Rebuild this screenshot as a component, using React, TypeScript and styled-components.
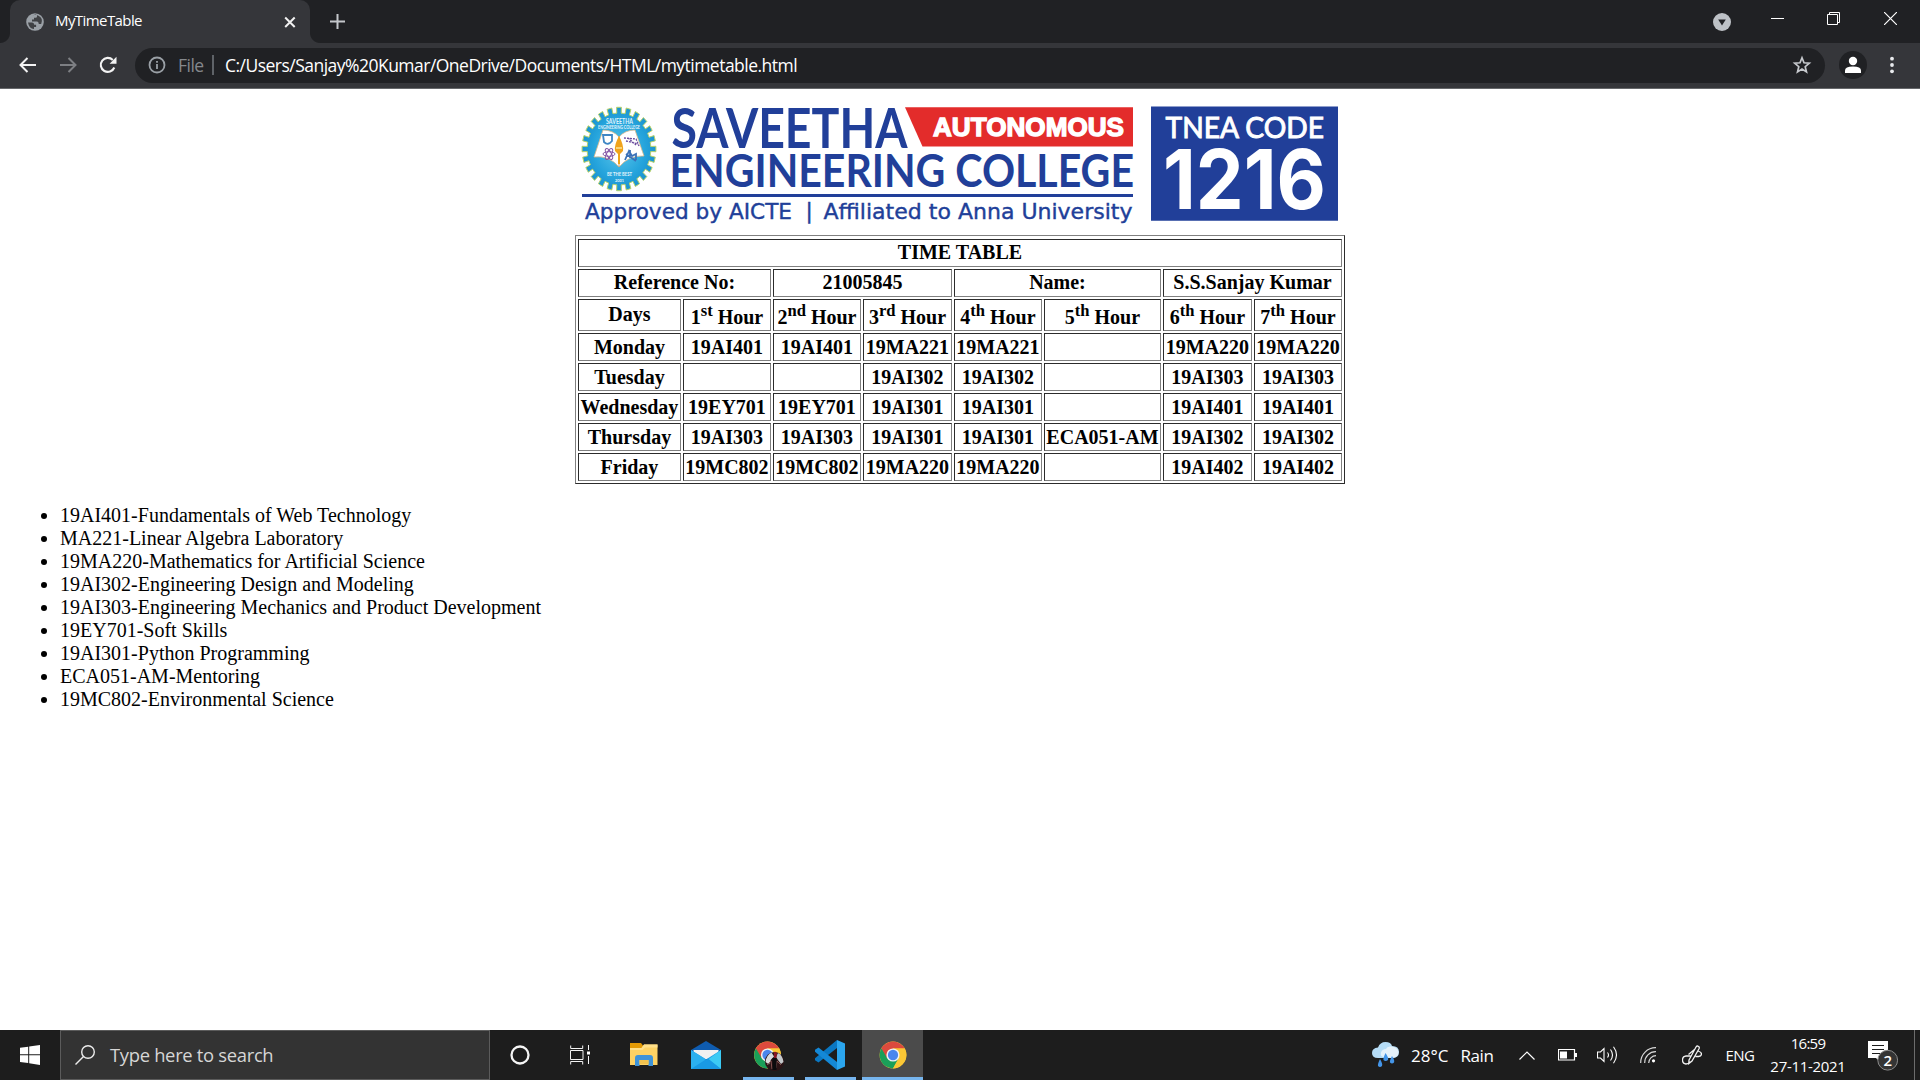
import React from 'react';
import styled, { createGlobalStyle } from 'styled-components';

const UI_FONT = '"Open Sans", "Noto Sans", sans-serif';
const PAGE_FONT = '"Liberation Serif", "Times New Roman", serif';
const BLUE = '#213f99';

const GlobalStyle = createGlobalStyle`
  html, body { margin: 0; padding: 0; background: #fff; overflow: hidden; }
  svg { display: block; flex: none; }
`;

const Screen = styled.div`
  width: 1920px;
  height: 1080px;
  display: flex;
  flex-direction: column;
  overflow: hidden;
`;

const Label = styled.span<{ $size: number; $color?: string; $track?: number; $drop?: number; $lift?: number }>`
  font-family: ${UI_FONT};
  font-size: ${(p) => p.$size}px;
  line-height: 1.2;
  color: ${(p) => p.$color ?? '#fff'};
  letter-spacing: ${(p) => p.$track ?? 0}px;
  padding-top: ${(p) => p.$drop ?? 0}px;
  padding-bottom: ${(p) => p.$lift ?? 0}px;
  white-space: pre;
`;

const TabStrip = styled.header`
  height: 43px;
  flex: none;
  display: flex;
  background: #202124;
`;

const TabCorner = styled.div<{ $side: 'left' | 'right' }>`
  width: 10px;
  height: 43px;
  background: radial-gradient(circle at ${(p) => (p.$side === 'left' ? '0' : '10px')} 33px, #202124 9.5px, #35363a 10.5px)
    0 0 / 10px 43px no-repeat;
  clip-path: inset(33px 0 0 0);
`;

const Tab = styled.div`
  width: 300px;
  height: 43px;
  box-sizing: border-box;
  padding: 0 13px 0 16px;
  display: flex;
  align-items: center;
  background: #35363a;
  border-radius: 10px 10px 0 0;
`;

const TabTitle = styled.div`
  flex: 1;
  padding: 0 0 3px 11px;
  display: flex;
`;

const NewTab = styled.div`
  padding: 14px 0 0 10px;
  flex: 1;
`;

const WindowControls = styled.div`
  display: flex;
`;

const ControlSlot = styled.div<{ $w: number; $top?: number }>`
  width: ${(p) => p.$w}px;
  padding-top: ${(p) => p.$top ?? 0}px;
  display: flex;
  justify-content: center;
  align-items: flex-start;
`;

const Toolbar = styled.div`
  height: 46px;
  flex: none;
  box-sizing: border-box;
  display: flex;
  align-items: center;
  padding: 0 0 1px 8px;
  background: #35363a;
  border-bottom: 1px solid #66686b;
`;

const NavSlot = styled.div`
  width: 40px;
  display: flex;
  justify-content: center;
`;

const Omnibox = styled.div`
  margin-left: 7px;
  width: 1690px;
  height: 35px;
  box-sizing: border-box;
  padding: 0 13px 0 13px;
  display: flex;
  align-items: center;
  background: #202124;
  border-radius: 18px;
`;

const SchemeDivider = styled.div`
  width: 2px;
  height: 20px;
  margin: 0 11px 0 9px;
  background: #5f6368;
`;

const Scheme = styled.div`
  width: 25px;
  margin-left: 12px;
`;

const UrlArea = styled.div`
  flex: 1;
`;

const Avatar = styled.div`
  width: 28px;
  height: 28px;
  margin: 0 23px 0 14px;
  display: flex;
  align-items: center;
  justify-content: center;
  background: #202124;
  border-radius: 50%;
`;

const Page = styled.main`
  flex: 1;
  display: flex;
  flex-direction: column;
  align-items: center;
  background: #fff;
  color: #000;
  font-family: ${PAGE_FONT};
  font-size: 20px;
  line-height: 23px;
`;

const Table = styled.table`
  width: 770px;
  box-sizing: border-box;
  table-layout: fixed;
  border-collapse: separate;
  border-spacing: 2px;
  border: 1px solid;
  border-color: #808080 #2c2c2c #2c2c2c #808080;
  padding-top: 1px;
  font-size: 20px;
`;

const Col = styled.col<{ $w: number }>`
  width: ${(p) => p.$w}px;
`;

const Row = styled.tr<{ $h: number }>`
  height: ${(p) => p.$h}px;
`;

const Cell = styled.th<{ $top: number }>`
  box-sizing: border-box;
  padding: ${(p) => p.$top}px 0 0;
  border: 1px solid;
  border-color: #2c2c2c #808080 #808080 #2c2c2c;
  font-weight: bold;
  line-height: 23px;
  text-align: center;
  vertical-align: top;
  white-space: nowrap;
  overflow: visible;
`;

const Sup = styled.sup`
  font-size: 16.6px;
  line-height: 0;
  vertical-align: 8px;
`;

const Subjects = styled.ul`
  align-self: stretch;
  margin: 20px 10px;
  padding: 0 0 0 50px;
`;

const Taskbar = styled.footer`
  height: 50px;
  flex: none;
  display: flex;
  background: #1d1d1d;
`;

const Start = styled.div`
  width: 60px;
  display: flex;
  align-items: center;
  justify-content: center;
`;

const Search = styled.div`
  width: 430px;
  box-sizing: border-box;
  border: 1px solid #5b5b5b;
  padding-left: 14px;
  display: flex;
  align-items: center;
  gap: 15px;
  background: #333;
`;

const AppSlot = styled.div<{ $w: number; $active?: boolean; $line?: number; $before?: number }>`
  width: ${(p) => p.$w}px;
  height: 50px;
  margin-left: ${(p) => p.$before ?? 0}px;
  display: flex;
  align-items: center;
  justify-content: center;
  background-color: ${(p) => (p.$active ? '#4b4b4b' : 'transparent')};
  background-image: linear-gradient(#76b5ee, #76b5ee);
  background-repeat: no-repeat;
  background-position: 50% 100%;
  background-size: ${(p) => p.$line ?? 0}px 3px;
`;

const Spacer = styled.div`
  flex: 1;
`;

const TraySlot = styled.div<{ $w: number }>`
  width: ${(p) => p.$w}px;
  display: flex;
  align-items: center;
  justify-content: center;
`;

const Weather = styled.div`
  width: 132px;
  display: flex;
  align-items: center;
  gap: 12px;
`;

const Clock = styled.div`
  width: 88px;
  display: flex;
  flex-direction: column;
  align-items: center;
  justify-content: center;
  gap: 5px;
  padding-bottom: 2px;
`;

const ShowDesktop = styled.div`
  width: 5px;
  border-left: 1px solid #6c6c6c;
`;

function gearPath(cx: number, cy: number, rx: number, ry: number, teeth: number) {
  const pts: string[] = [];
  for (let i = 0; i < teeth; i++) {
    const steps: [number, number][] = [[-0.5, 0.86], [-0.27, 0.86], [-0.25, 1], [0.25, 1], [0.27, 0.86]];
    for (const [off, r] of steps) {
      const a = ((i + off) / teeth) * Math.PI * 2 - Math.PI / 2;
      pts.push(`${(cx + Math.cos(a) * rx * r).toFixed(2)},${(cy + Math.sin(a) * ry * r).toFixed(2)}`);
    }
  }
  return `M${pts.join('L')}Z`;
}

function CollegeBanner() {
  const fit = 'spacingAndGlyphs';
  return (
    <svg width="770" height="146" viewBox="575 89 770 146">
      <defs>
        <radialGradient id="seal">
          <stop offset="0" stopColor="#5cc6ea" />
          <stop offset="0.7" stopColor="#25a4dc" />
          <stop offset="1" stopColor="#1b93d0" />
        </radialGradient>
      </defs>
      <path d={gearPath(619, 149, 37, 41.8, 24)} fill="url(#seal)" stroke="#b9d36a" strokeWidth="1" />
      <path d="M603 130 Q613 130 619 137 Q625 130 635 130 L644 156 Q629 155 619 167 Q609 155 594 157 Z" fill="#fff" stroke="#d9b98a" strokeWidth="0.8" />
      <path d="M619 136V167" stroke="#c9a26a" strokeWidth="1" />
      <path d="M619 136 Q614 145 615 151 L618 154 V164 H620 V154 L623 151 Q624 145 619 136Z" fill="#f0a31c" />
      <path d="M616 147h6v2h-6z" fill="#f8d376" />
      <path d="M603 135h9v6q-4 5-8 1z" fill="none" stroke="#3f86c4" strokeWidth="1.8" />
      <g fill="none" stroke="#8455a5" strokeWidth="1">
        <ellipse cx="609" cy="154" rx="6" ry="2.3" />
        <ellipse cx="609" cy="154" rx="6" ry="2.3" transform="rotate(60 609 154)" />
        <ellipse cx="609" cy="154" rx="6" ry="2.3" transform="rotate(120 609 154)" />
      </g>
      <path d="M624 138l12 1 3 7M626 141l12 3M628 138l8 7" stroke="#6a4b9c" strokeWidth="1.3" strokeDasharray="2 1" fill="none" />
      <path d="M625 160l4-9 3 5 4-2 0 6M626 154l10 7M630 150v8" stroke="#3b71b8" strokeWidth="1.8" fill="none" />
      <g fill="#e4f5fc" fontFamily="Lato, sans-serif" fontWeight="700">
        <text x="606" y="123.5" fontSize="6.6" textLength="27" lengthAdjust={fit}>SAVEETHA</text>
        <text x="598" y="129.3" fontSize="4.8" textLength="42" lengthAdjust={fit}>ENGINEERING COLLEGE</text>
        <text x="607" y="176.3" fontSize="5.2" textLength="25" lengthAdjust={fit}>BE THE BEST</text>
        <text x="615" y="181.5" fontSize="4.2" textLength="9" lengthAdjust={fit}>2001</text>
      </g>
      <g fill={BLUE} fontFamily="Lato, sans-serif" fontWeight="700">
        <text x="671.5" y="147.5" fontSize="55" textLength="236" lengthAdjust={fit}>SAVEETHA</text>
        <text x="669.5" y="187" fontSize="45" textLength="464.5" lengthAdjust={fit}>ENGINEERING COLLEGE</text>
      </g>
      <path d="M582 194h551v3H582z" fill={BLUE} />
      <g fill={BLUE} stroke={BLUE} strokeWidth="0.4" fontFamily='"DejaVu Sans", sans-serif' fontSize="21.8">
        <text x="585" y="218.5" textLength="207" lengthAdjust={fit}>Approved by AICTE</text>
        <text x="805.5" y="217.5">|</text>
        <text x="823.5" y="218.5" textLength="309" lengthAdjust={fit}>Affiliated to Anna University</text>
      </g>
      <path d="M905 107.3h228v39.2H922.5z" fill="#e32c2b" />
      <text x="933" y="136.200" fill="#fff" stroke="#fff" strokeWidth="1.400" fontFamily='"Liberation Sans", Arial, sans-serif' fontWeight="700" fontSize="26.500" textLength="191" lengthAdjust={fit}>AUTONOMOUS</text>
      <path d="M1151 106.500h187v114.300h-187z" fill={BLUE} />
      <text x="1165.500" y="138.300" fill="#fff" stroke="#fff" strokeWidth="0.900" fontFamily="Lato, sans-serif" fontWeight="400" fontSize="28" textLength="158.500" lengthAdjust={fit}>TNEA CODE</text>
      <text x="1163" y="208.500" fill="#fff" fontFamily="Inter, sans-serif" fontWeight="700" fontSize="82" textLength="163" lengthAdjust={fit}>1216</text>
    </svg>
  );
}

function ChromeLogo() {
  return (
    <svg width="28" height="28" viewBox="0 0 48 48">
      <circle cx="24" cy="24" r="23" fill="#fbc735" />
      <path d="M24 24L4.1 12.5A23 23 0 0 0 24 47L34 29.7z" fill="#1a9f59" />
      <path d="M4.1 12.5A23 23 0 0 1 43.9 12.5L44 13H24L14 29.7z" fill="#dc4a3d" />
      <path d="M24 13H44.2A23 23 0 0 1 24 47L33.6 29.6z" fill="#fbc735" />
      <circle cx="24" cy="24" r="11.3" fill="#f1f1f1" />
      <circle cx="24" cy="24" r="8.8" fill="#4a86ee" />
    </svg>
  );
}

function ChromeProfileLogo() {
  return (
    <svg width="32" height="32" viewBox="-2 -2 32 32">
      <g transform="translate(-0.5 0)">
        <ChromeLogo />
      </g>
      <circle cx="20.5" cy="20.500" r="9.600" fill="#2a1416" />
      <path d="M11.500 21q1-7 6-9.500l2.500 4-3 3-2 5z" fill="#d9dcdd" />
      <path d="M29.500 21q-1-7-5.500-9l-2 4 2 3 3 4z" fill="#c3c8ca" />
      <path d="M20 11q3-1 3 3l-1 4-2-1z" fill="#8a1723" />
      <path d="M13 24l4-4 1 8M27 24l-4-4-1 7" stroke="#8e5a58" strokeWidth="0.900" fill="none" />
      <path d="M18.500 17h4v12h-4z" fill="#0b0b0d" />
    </svg>
  );
}

const columns = [103, 88, 88, 89, 88, 117, 89, 88];

const hours: [string, string][] = [
  ['1', 'st'], ['2', 'nd'], ['3', 'rd'], ['4', 'th'], ['5', 'th'], ['6', 'th'], ['7', 'th'],
];

const days: string[][] = [
  ['Monday', '19AI401', '19AI401', '19MA221', '19MA221', '', '19MA220', '19MA220'],
  ['Tuesday', '', '', '19AI302', '19AI302', '', '19AI303', '19AI303'],
  ['Wednesday', '19EY701', '19EY701', '19AI301', '19AI301', '', '19AI401', '19AI401'],
  ['Thursday', '19AI303', '19AI303', '19AI301', '19AI301', 'ECA051-AM', '19AI302', '19AI302'],
  ['Friday', '19MC802', '19MC802', '19MA220', '19MA220', '', '19AI402', '19AI402'],
];

const subjects = [
  '19AI401-Fundamentals of Web Technology',
  'MA221-Linear Algebra Laboratory',
  '19MA220-Mathematics for Artificial Science',
  '19AI302-Engineering Design and Modeling',
  '19AI303-Engineering Mechanics and Product Development',
  '19EY701-Soft Skills',
  '19AI301-Python Programming',
  'ECA051-AM-Mentoring',
  '19MC802-Environmental Science',
];

function TimeTable() {
  return (
    <Table>
      <colgroup>{columns.map((w, i) => <Col key={i} $w={w} />)}</colgroup>
      <tbody>
        <Row $h={28}><Cell $top={1} colSpan={8}>TIME TABLE</Cell></Row>
        <Row $h={28}>
          <Cell $top={1} colSpan={2}>Reference No:</Cell>
          <Cell $top={1} colSpan={2}>21005845</Cell>
          <Cell $top={1} colSpan={2}>Name:</Cell>
          <Cell $top={1} colSpan={2}>S.S.Sanjay Kumar</Cell>
        </Row>
        <Row $h={32}>
          <Cell $top={3}>Days</Cell>
          {hours.map(([n, s]) => <Cell $top={6} key={n}>{n}<Sup>{s}</Sup> Hour</Cell>)}
        </Row>
        {days.map((day) => (
          <Row key={day[0]} $h={28}>{day.map((c, i) => <Cell $top={2} key={i}>{c}</Cell>)}</Row>
        ))}
      </tbody>
    </Table>
  );
}

function Browser() {
  return (
    <>
      <TabStrip>
        <TabCorner $side="left" />
        <Tab>
          <svg width="18" height="18" viewBox="0 0 18 18">
            <circle cx="9" cy="9" r="8.8" fill="#9aa0a6" />
            <path d="M2 9.500h4.200q2 .2 2 2.200h1.900v2.200H8v2.200Q3 15.500 2 9.500zM6.500 2.500Q9 1.300 11 2v1.500q0 1.300-1.500 1.300H8v1.800H6v2h5q1.500 0 1.800 2.300h2.400Q17.500 5 12.500 2.700Q9 .8 6.500 2.500z" fill="#35363a" opacity="0.900" />
          </svg>
          <TabTitle><Label $size={15} $track={-0.58}>MyTimeTable</Label></TabTitle>
          <svg width="14" height="14" viewBox="0 0 14 14" stroke="#f1f1f1" strokeWidth="2"><path d="M2.200 2.500l9.500 9.500M11.700 2.500l-9.500 9.500" /></svg>
        </Tab>
        <TabCorner $side="right" />
        <NewTab>
          <svg width="16" height="16" viewBox="0 0 16 16" stroke="#c4c7cb" strokeWidth="2"><path d="M7.500 0v15M0 7.500h15" /></svg>
        </NewTab>
        <WindowControls>
          <ControlSlot $w={54} $top={13}>
            <svg width="18" height="18" viewBox="0 0 18 18"><circle cx="9" cy="9" r="9" fill="#bdc1c6" /><path d="M5.200 6.500h7.600L9 12.500z" fill="#202124" /></svg>
          </ControlSlot>
          <ControlSlot $w={57} $top={18}>
            <svg width="13" height="1"><path d="M0 .5h13" stroke="#fff" /></svg>
          </ControlSlot>
          <ControlSlot $w={55} $top={12}>
            <svg width="13" height="13" fill="none" stroke="#fff"><path d="M.5 2.500h10v10h-10zM2.500 2.500v-2h10v10h-2" /></svg>
          </ControlSlot>
          <ControlSlot $w={59} $top={12}>
            <svg width="13" height="13" stroke="#fff" strokeWidth="1.200"><path d="M0 0l13 13M13 0L0 13" /></svg>
          </ControlSlot>
        </WindowControls>
      </TabStrip>
      <Toolbar>
        <NavSlot><svg width="18" height="16" viewBox="0 0 18 16" fill="none" stroke="#f3f3f3" strokeWidth="2"><path d="M17 8H2M8.500 1L1.500 8l7 7" /></svg></NavSlot>
        <NavSlot><svg width="18" height="16" viewBox="0 0 18 16" fill="none" stroke="#7d7f83" strokeWidth="2"><path d="M1 8h15M9.500 1l7 7-7 7" /></svg></NavSlot>
        <NavSlot><svg width="18" height="18" viewBox="0 0 18 18"><path d="M15.300 11.500A7 7 0 1 1 13.800 4" fill="none" stroke="#f3f3f3" strokeWidth="2.100" /><path d="M17.500 .8v6.900h-6.900z" fill="#f3f3f3" /></svg></NavSlot>
        <Omnibox>
          <svg width="18" height="18" viewBox="0 0 18 18" fill="none" stroke="#9aa0a6" strokeWidth="1.800"><circle cx="9" cy="9" r="7.500" /><path d="M9 8v5M9 5v1.800" /></svg>
          <Scheme><Label $size={17.5} $track={-0.5} $color="#85888c">File</Label></Scheme>
          <SchemeDivider />
          <UrlArea><Label $size={17.5} $track={-0.52}>C:/Users/Sanjay%20Kumar/OneDrive/Documents/HTML/mytimetable.html</Label></UrlArea>
          <svg width="20" height="20" viewBox="0 0 20 20" fill="none" stroke="#c6c9cd" strokeWidth="1.700"><path d="M10 2.800l2 5 5.300.4-4.100 3.500 1.300 5.200L10 14.100l-4.500 2.800 1.300-5.200-4.100-3.500 5.300-.4z" /></svg>
        </Omnibox>
        <Avatar>
          <svg width="18" height="18" viewBox="0 0 18 18" fill="#fff"><circle cx="9" cy="5" r="4.200" /><path d="M1 17v-2.500q0-4 8-4t8 4V17z" /></svg>
        </Avatar>
        <svg width="4" height="18" viewBox="0 0 4 18" fill="#e8eaed"><circle cx="2" cy="2.700" r="1.900" /><circle cx="2" cy="9" r="1.900" /><circle cx="2" cy="15.300" r="1.900" /></svg>
      </Toolbar>
    </>
  );
}

function WindowsTaskbar() {
  return (
    <Taskbar>
      <Start>
        <svg width="20" height="20" viewBox="0 0 20 20" fill="#fff"><path d="M0 2.800L8.200 1.700v7.500H0zM9.200 1.500L20 0v9.200H9.200zM0 10.200h8.200v7.900L0 17zM9.200 10.200H20V20L9.200 18.300z" /></svg>
      </Start>
      <Search>
        <svg width="20" height="20" viewBox="0 0 20 20" fill="none" stroke="#ececec" strokeWidth="1.400"><circle cx="13" cy="7" r="6.300" /><path d="M8.500 11.500L.5 19.500" /></svg>
        <Label $size={18.4} $track={-0.31} $color="#d6d6d6">Type here to search</Label>
      </Search>
      <AppSlot $w={60}>
        <svg width="20" height="20" viewBox="0 0 20 20" fill="none" stroke="#f5f5f5" strokeWidth="2.300"><circle cx="10" cy="10" r="8.500" /></svg>
      </AppSlot>
      <AppSlot $w={60}>
        <svg width="20" height="20" viewBox="0 0 20 20" fill="none" stroke="#f5f5f5"><path d="M.7 .5v3h12v-3M.5 5.500h12.500v9H.5zM.7 19.500v-3h12v3M18.500 0v5M18.500 11v8" /><path d="M17 6.500h3v3h-3z" fill="#fff" stroke="none" /></svg>
      </AppSlot>
      <AppSlot $w={62} $before={3}>
        <svg width="28" height="24" viewBox="0 0 28 24"><path d="M0 0h11l2 2.500V7H0z" fill="#e39a05" /><path d="M0 5h11.500L14 1.500h13.500V22H0z" fill="#fdd264" /><path d="M0 5h11.500L14 1.500h13.500v3H15L12.500 7H0z" fill="#ffe08a" /><path d="M5 23V15q0-3 3-3h12q3 0 3 3v8h-4.500v-6h-9v6z" fill="#3e93d8" /><path d="M9.500 17h9v4h-9z" fill="#f2c24e" /></svg>
      </AppSlot>
      <AppSlot $w={62}>
        <svg width="30" height="28" viewBox="0 0 30 28"><path d="M0 9L15 0l15 9v3H0z" fill="#0f5cb0" /><path d="M2.500 9h25v9h-25z" fill="#f1f1f1" /><path d="M0 9l15 9.500L30 9v19H0z" fill="#1c9be6" /><path d="M17 18.500L30 9v19z" fill="#3ccbf4" /><path d="M0 28h30L17 17.500z" fill="#199ae4" /><path d="M0 9l15 9.300L0 28z" fill="#2bb0ef" /></svg>
      </AppSlot>
      <AppSlot $w={62} $line={51}><ChromeProfileLogo /></AppSlot>
      <AppSlot $w={62} $line={51}>
        <svg width="30" height="30" viewBox="0 0 30 30"><path d="M22 0l8 3.500v23L22 30z" fill="#2ba6ef" /><path d="M22 0v8L3.500 22.500 0 20.300v-2z" fill="#0a77c2" /><path d="M22 30v-8L3.500 7.500 0 9.700v2z" fill="#1488d6" /></svg>
      </AppSlot>
      <AppSlot $w={61} $before={1} $active $line={61}><ChromeLogo /></AppSlot>
      <Spacer />
      <Weather>
        <svg width="27" height="26" viewBox="0 0 27 26">
          <path d="M6 16q-6 0-6-5t6-5.500Q8 0 13.500 0T20 4q7 0 7 6t-7 6z" fill="#b5dcf6" />
          <path d="M11 15q-3-1-2-4.500T14 7q1-3 5-2.500 7 .5 7.500 5.500T20 16z" fill="#e5f1fa" />
          <path d="M13.500 11q3.500 5 2.500 7-2.500 2-4.500 0-.5-2 2-7zM8 17q3 5 2 7-2 2-4 0-.5-2 2-7zM20 14q3 4 2 6.500-2 2-4 0-.5-2 2-6.500z" fill="#4495e8" />
        </svg>
        <Label $size={17} $drop={2}>28°C</Label>
        <Label $size={17} $track={-0.4} $drop={2}>Rain</Label>
      </Weather>
      <TraySlot $w={45}><svg width="16" height="9" viewBox="0 0 16 9" fill="none" stroke="#fff" strokeWidth="1.200"><path d="M.5 8.500L8 1l7.500 7.500" /></svg></TraySlot>
      <TraySlot $w={37}><svg width="19" height="12" fill="none" stroke="#fff"><path d="M.5 .5h16v10.500h-16z" strokeWidth="1.200" /><path d="M2 2.500h7v7H2zM17 4h2v4h-2z" fill="#fff" stroke="none" /></svg></TraySlot>
      <TraySlot $w={42}><svg width="21" height="18" viewBox="0 0 21 18" fill="none" stroke="#fff" strokeWidth="1.100"><path d="M.5 6h3L7 2.500v13L3.500 12h-3zM10.500 6.500q2 2.500 0 5M13.500 3.500q4 5.500 0 11M16.500 .8q6 8.200 0 16.400" /></svg></TraySlot>
      <TraySlot $w={40}><svg width="16" height="16" viewBox="0 0 16 16" fill="none" stroke="#d8d8d8" strokeWidth="1.200"><path d="M.7 16A15 15 0 0 1 16 .7M4.700 16A11 11 0 0 1 16 4.700M8.700 16A7.300 7.300 0 0 1 16 8.700" /><circle cx="13.500" cy="13.800" r="1.600" fill="#fff" stroke="none" /></svg></TraySlot>
      <TraySlot $w={48}><svg width="20" height="20" viewBox="0 0 20 20" fill="none" stroke="#f2f2f2" strokeWidth="1.300"><path d="M7 15L14 2q1-1.500 2.300-.7 1.500.8.700 2.400L10 16l-3.200 2.500zM12.500 4.500L6.500 9.500M8.500 11H4q-3.500.5-3.500 4t3.500 4q2.500 0 4-2.500M16 6q3.500 1 3.500 3t-3 2.500h-3" /></svg></TraySlot>
      <TraySlot $w={48}><Label $size={15} $track={-0.5}>ENG</Label></TraySlot>
      <Clock>
        <Label $size={15} $track={-0.75}>16:59</Label>
        <Label $size={15} $track={-0.3}>27-11-2021</Label>
      </Clock>
      <TraySlot $w={62}>
        <svg width="30" height="32" viewBox="0 0 30 32">
          <path d="M0 2h20v17h-8v4l-4-4H0z" fill="#fff" />
          <path d="M4 6.500h12M4 10.500h12M4 14.500h8" stroke="#1d1d1d" strokeWidth="1.100" />
          <circle cx="19.700" cy="21.200" r="9.900" fill="#343434" stroke="#8b8b8b" />
          <text x="19.700" y="27" textAnchor="middle" fill="#fff" fontFamily={UI_FONT} fontWeight="600" fontSize="15">2</text>
        </svg>
      </TraySlot>
      <ShowDesktop />
    </Taskbar>
  );
}

export default function App() {
  return (
    <Screen>
      <GlobalStyle />
      <Browser />
      <Page>
        <CollegeBanner />
        <TimeTable />
        <Subjects>{subjects.map((s) => <li key={s}>{s}</li>)}</Subjects>
      </Page>
      <WindowsTaskbar />
    </Screen>
  );
}
